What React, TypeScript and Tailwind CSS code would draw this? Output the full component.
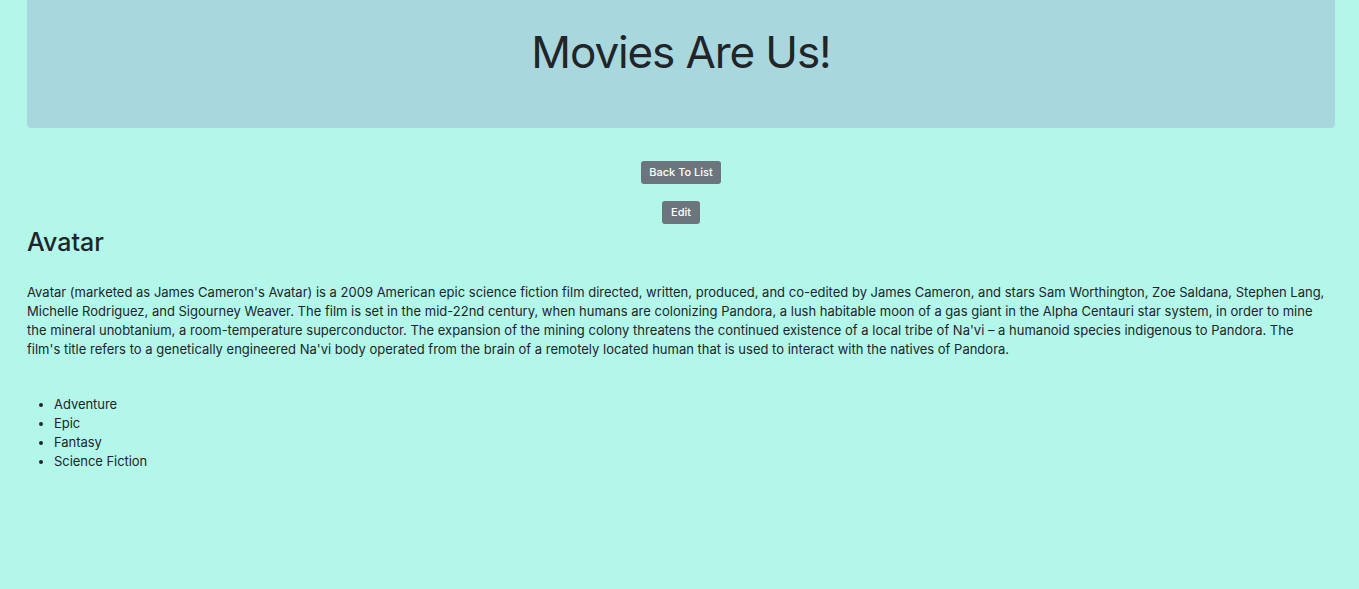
import React from "react";

const genres = ["Adventure", "Epic", "Fantasy", "Science Fiction"];

const App: React.FC = () => {
  return (
    <div
      className="min-h-screen bg-[#b3f7ea] text-[#212529] pl-[27px] pr-[24px]"
      style={{ fontFamily: "Inter, 'Noto Sans', sans-serif" }}
    >
      {/* header */}
      <div className="h-[128px] bg-[#a8d8de] rounded-b-[4px] flex justify-center pt-[25px]">
        <h1 className="text-[44px] leading-[54px] font-normal tracking-[-1.1px]">Movies Are Us!</h1>
      </div>

      <div className="flex flex-col items-center pt-[33px]">
        <button className="bg-[#6c757d] text-white text-[11px] font-medium rounded-[3px] h-[23px] w-[80px]">
          Back To List
        </button>
        <button className="mt-[17px] bg-[#6c757d] text-white text-[11px] font-medium rounded-[3px] h-[23px] w-[38px]">
          Edit
        </button>
      </div>

      <h2 className="text-[25px] leading-[30px] font-medium mt-[3px]">Avatar</h2>

      {/* breaks follow the original wrap */}
      <p className="mt-[26px] text-[13px] leading-[19px]">
        Avatar (marketed as James Cameron's Avatar) is a 2009 American epic science fiction film directed, written,
        produced, and co-edited by James Cameron, and stars Sam Worthington, Zoe Saldana, Stephen Lang,
        <br />
        Michelle Rodriguez, and Sigourney Weaver. The film is set in the mid-22nd century, when humans are colonizing
        Pandora, a lush habitable moon of a gas giant in the Alpha Centauri star system, in order to mine
        <br />
        the mineral unobtanium, a room-temperature superconductor. The expansion of the mining colony threatens the
        continued existence of a local tribe of Na'vi – a humanoid species indigenous to Pandora. The
        <br />
        film's title refers to a genetically engineered Na'vi body operated from the brain of a remotely located human
        that is used to interact with the natives of Pandora.
      </p>

      <ul className="mt-[36px] list-disc pl-[27px] text-[13px] leading-[19px] tracking-[-0.05px]">
        {genres.map((g) => (
          <li key={g}>{g}</li>
        ))}
      </ul>
    </div>
  );
};

export default App;
